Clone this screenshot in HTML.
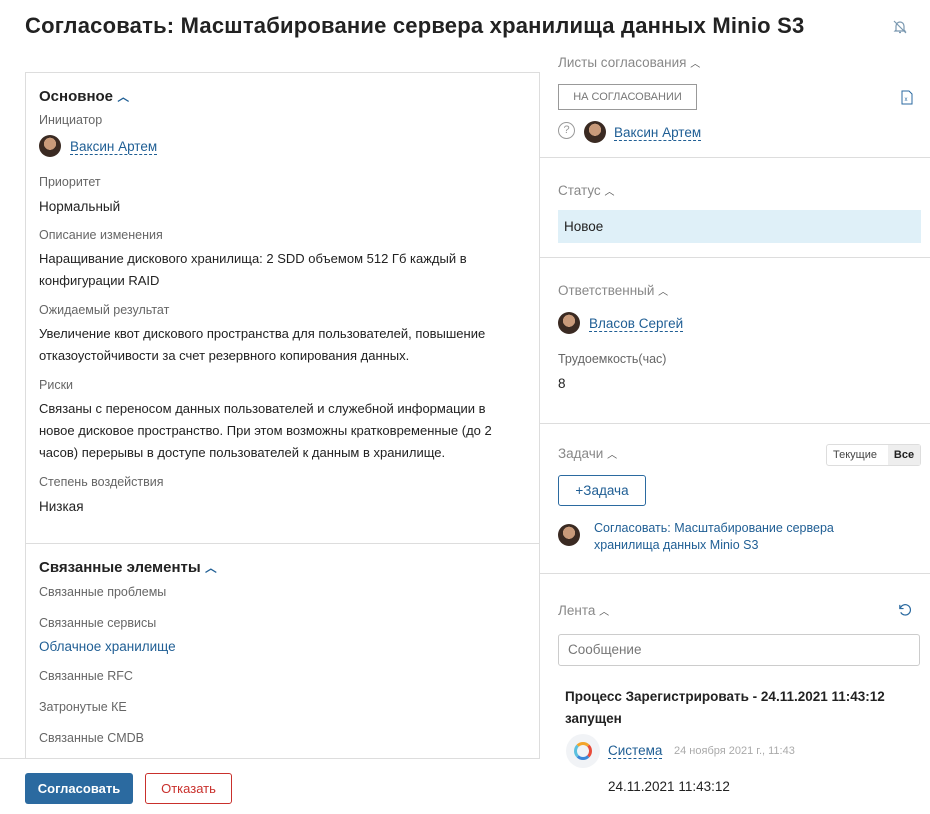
<!DOCTYPE html>
<html><head><meta charset="utf-8"><style>
*{margin:0;padding:0;box-sizing:border-box}
body{width:930px;height:814px;background:#fff;font-family:"Liberation Sans","Noto Sans CJK SC",sans-serif;color:#222;position:relative;overflow:hidden;font-size:14px}
.a{position:absolute;white-space:nowrap}
.lbl{font-size:12.5px;color:#666}
.val{font-size:13.5px;color:#222}
.txt{font-size:13px;color:#222;line-height:22px}
.lnk{color:#1f5e94;border-bottom:1px dashed #1f5e94;font-size:13.5px}
.h{font-size:15px;color:#222;font-weight:600}
.rh{font-size:13.5px;color:#888}
.car{font-size:10px;color:#555}
.av{position:absolute;width:22px;height:22px;border-radius:50%;background:radial-gradient(circle at 50% 40%,#c89a7a 0 35%,#3a2a22 36% 100%)}
.hr{position:absolute;left:540px;width:390px;height:1px;background:#ddd}
</style></head><body>
<div class="a" style="left:25px;top:13px;font-size:22px;font-weight:600;color:#222;letter-spacing:0.2px">Согласовать: Масштабирование сервера хранилища данных Minio S3</div>
<svg class="a" style="left:892px;top:19px" width="16" height="16" viewBox="0 0 16 16" fill="none" stroke="#7a98b0" stroke-width="1.2"><path d="M4 11V7a4 4 0 0 1 8 0v4l1 1H3z M7 13.5h2 M2 2l12 12"/></svg>

<div class="a" style="left:25px;top:72px;width:515px;height:686px;border:1px solid #ddd;border-bottom:none"></div>
<div class="a" style="left:25px;top:543px;width:515px;height:1px;background:#ddd"></div>
<div class="a h" style="left:39px;top:88px">Основное <span style="color:#1f5e94;font-size:12px">︿</span></div>
<div class="a lbl" style="left:39px;top:113px">Инициатор</div>
<div class="av" style="left:39px;top:135px"></div>
<div class="a lnk" style="left:70px;top:139px">Ваксин Артем</div>
<div class="a lbl" style="left:39px;top:175px">Приоритет</div>
<div class="a val" style="left:39px;top:199px">Нормальный</div>
<div class="a lbl" style="left:39px;top:228px">Описание изменения</div>
<div class="a txt" style="left:39px;top:248px">Наращивание дискового хранилища: 2 SDD объемом 512 Гб каждый в<br>конфигурации RAID</div>
<div class="a lbl" style="left:39px;top:303px">Ожидаемый результат</div>
<div class="a txt" style="left:39px;top:323px">Увеличение квот дискового пространства для пользователей, повышение<br>отказоустойчивости за счет резервного копирования данных.</div>
<div class="a lbl" style="left:39px;top:378px">Риски</div>
<div class="a txt" style="left:39px;top:398px">Связаны с переносом данных пользователей и служебной информации в<br>новое дисковое пространство. При этом возможны кратковременные (до 2<br>часов) перерывы в доступе пользователей к данным в хранилище.</div>
<div class="a lbl" style="left:39px;top:475px">Степень воздействия</div>
<div class="a val" style="left:39px;top:499px">Низкая</div>
<div class="a h" style="left:39px;top:559px">Связанные элементы <span style="color:#1f5e94;font-size:12px">︿</span></div>
<div class="a lbl" style="left:39px;top:585px">Связанные проблемы</div>
<div class="a lbl" style="left:39px;top:616px">Связанные сервисы</div>
<div class="a val" style="left:39px;top:639px;color:#1f5e94">Облачное хранилище</div>
<div class="a lbl" style="left:39px;top:669px">Связанные RFC</div>
<div class="a lbl" style="left:39px;top:700px">Затронутые КЕ</div>
<div class="a lbl" style="left:39px;top:731px">Связанные CMDB</div>
<div class="a" style="left:0;top:758px;width:540px;height:1px;background:#ddd"></div>
<div class="a" style="left:25px;top:773px;width:108px;height:31px;background:#2b6aa0;border-radius:3px;color:#fff;font-size:13px;font-weight:600;text-align:center;line-height:31px">Согласовать</div>
<div class="a" style="left:145px;top:773px;width:87px;height:31px;border:1px solid #c9302c;border-radius:3px;color:#c9302c;font-size:13px;text-align:center;line-height:29px">Отказать</div>

<div class="a rh" style="left:558px;top:55px">Листы согласования <span class="car">︿</span></div>
<div class="a" style="left:558px;top:84px;width:139px;height:26px;border:1px solid #999;font-size:11px;color:#777;text-align:center;line-height:24px">НА СОГЛАСОВАНИИ</div>
<svg class="a" style="left:901px;top:90px" width="12" height="15" viewBox="0 0 12 15" fill="none" stroke="#2b6aa0"><path d="M1 1h7l3 3v10H1z"/><text x="3.5" y="11" font-size="6" fill="#2b6aa0" stroke="none">x</text></svg>
<div class="a" style="left:558px;top:122px;width:17px;height:17px;border:1px solid #999;border-radius:50%;font-size:11px;color:#999;text-align:center;line-height:15px">?</div>
<div class="av" style="left:584px;top:121px"></div>
<div class="a lnk" style="left:614px;top:125px">Ваксин Артем</div>
<div class="hr" style="top:157px"></div>
<div class="a rh" style="left:558px;top:183px">Статус <span class="car">︿</span></div>
<div class="a val" style="left:558px;top:210px;width:363px;height:33px;background:#dff0f8;padding-left:6px;line-height:33px">Новое</div>
<div class="hr" style="top:257px"></div>
<div class="a rh" style="left:558px;top:283px">Ответственный <span class="car">︿</span></div>
<div class="av" style="left:558px;top:312px"></div>
<div class="a lnk" style="left:589px;top:316px">Власов Сергей</div>
<div class="a lbl" style="left:558px;top:352px">Трудоемкость(час)</div>
<div class="a val" style="left:558px;top:376px">8</div>
<div class="hr" style="top:423px"></div>
<div class="a rh" style="left:558px;top:446px">Задачи <span class="car">︿</span></div>
<div class="a" style="left:826px;top:444px;width:95px;height:22px;border:1px solid #ddd;border-radius:3px;font-size:11px;line-height:20px"><span style="padding:0 6px;color:#444">Текущие</span><span style="position:absolute;right:0;top:0;width:32px;height:20px;background:#eee;text-align:center;font-weight:600">Все</span></div>
<div class="a" style="left:558px;top:475px;width:88px;height:31px;border:1px solid #2b6aa0;border-radius:3px;color:#1f5e94;text-align:center;line-height:29px;font-size:13.5px">+Задача</div>
<div class="av" style="left:558px;top:524px"></div>
<div class="a" style="left:594px;top:520px;color:#1f5e94;font-size:12.5px;line-height:17px">Согласовать: Масштабирование сервера<br>хранилища данных Minio S3</div>
<div class="hr" style="top:573px"></div>
<div class="a rh" style="left:558px;top:603px">Лента <span class="car">︿</span></div>
<svg class="a" style="left:897px;top:602px" width="15" height="15" viewBox="0 0 16 16" fill="none" stroke="#2b6aa0" stroke-width="1.3"><path d="M3 3v4h4M3.5 7A5.5 5.5 0 1 1 4 11"/></svg>
<div class="a" style="left:558px;top:634px;width:362px;height:32px;border:1px solid #ccc;border-radius:3px;padding-left:9px;line-height:30px;color:#777;font-size:13.5px">Сообщение</div>
<div class="a" style="left:565px;top:686px;font-weight:600;line-height:22px;font-size:13.5px">Процесс Зарегистрировать - 24.11.2021 11:43:12<br>запущен</div>
<div class="a" style="left:566px;top:734px;width:34px;height:34px;border-radius:50%;background:#f1f3f6"></div>
<div class="a" style="left:574px;top:742px;width:18px;height:18px;border-radius:50%;border:3px solid;border-color:#f3a52b #e84b3a #3a87d8 #5bc0de"></div>
<div class="a lnk" style="left:608px;top:743px">Система</div>
<div class="a" style="left:674px;top:745px;font-size:11px;color:#aaa">24 ноября 2021 г., 11:43</div>
<div class="a val" style="left:608px;top:779px">24.11.2021 11:43:12</div>
</body></html>
